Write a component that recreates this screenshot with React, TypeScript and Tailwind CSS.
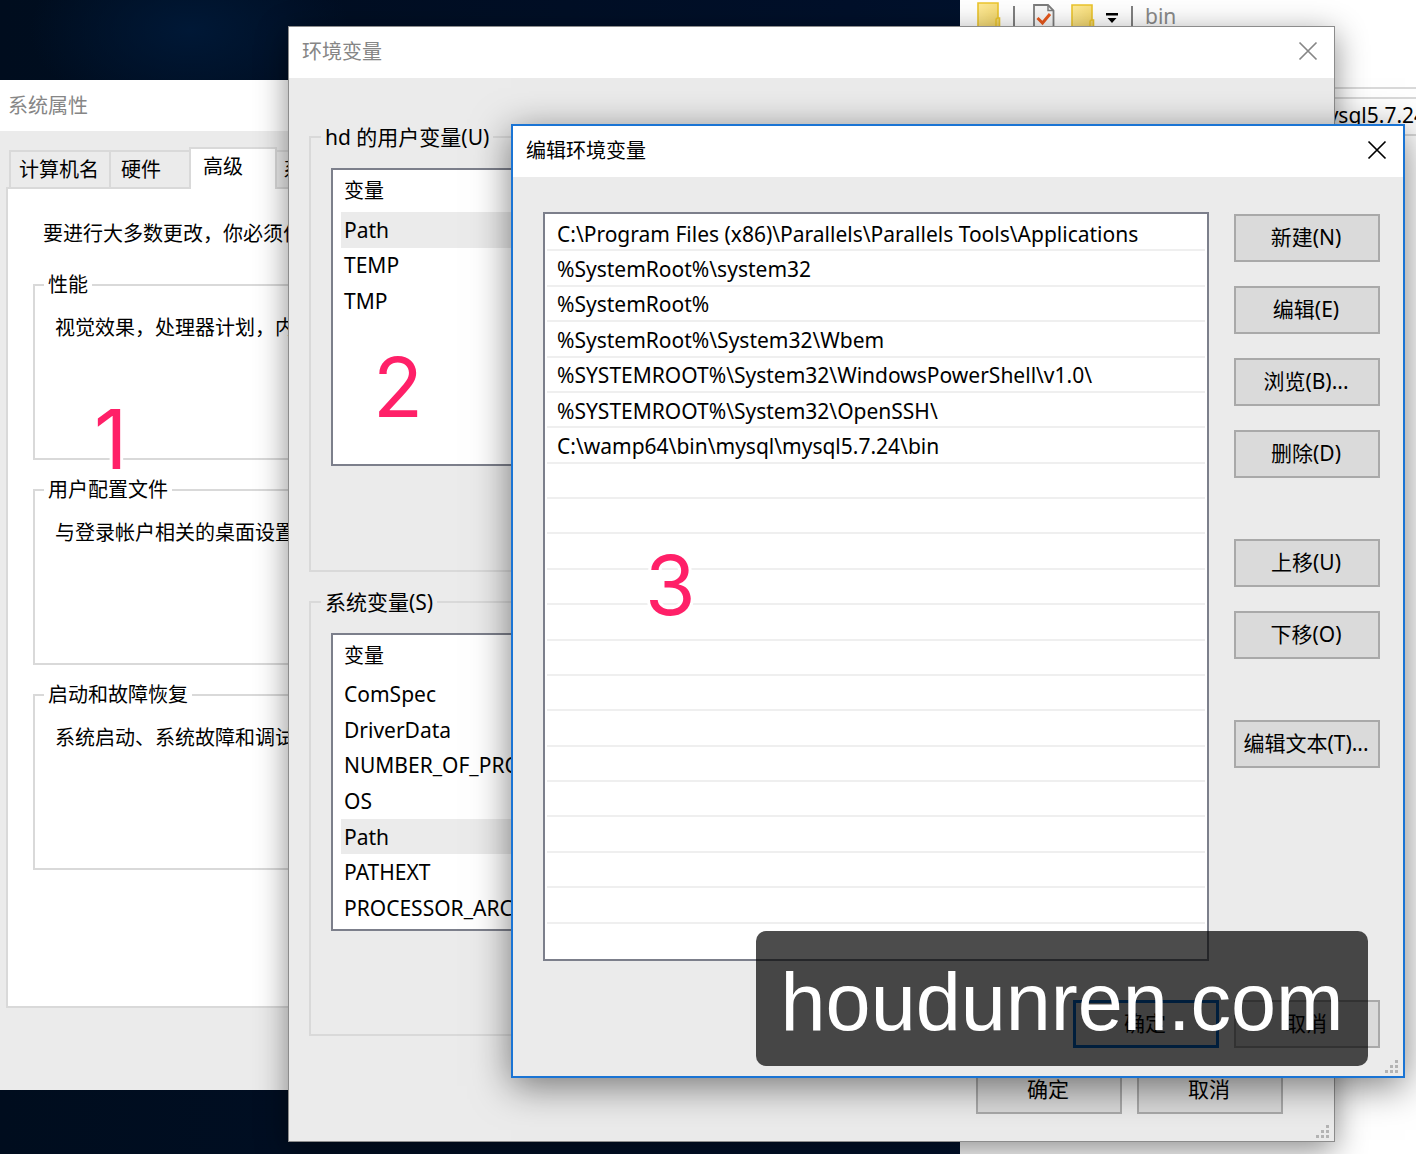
import type { ReactNode } from "react";

const tabs = ["计算机名", "硬件", "高级", "系统保护"];

const systemGroups = [
  { title: "性能", text: "视觉效果，处理器计划，内存使用，以及虚拟内存" },
  { title: "用户配置文件", text: "与登录帐户相关的桌面设置" },
  { title: "启动和故障恢复", text: "系统启动、系统故障和调试信息" },
];

const userVariables = ["Path", "TEMP", "TMP"];

const systemVariables = [
  "ComSpec",
  "DriverData",
  "NUMBER_OF_PROCESSORS",
  "OS",
  "Path",
  "PATHEXT",
  "PROCESSOR_ARCHITECTURE",
];

const pathEntries = [
  "C:\\Program Files (x86)\\Parallels\\Parallels Tools\\Applications",
  "%SystemRoot%\\system32",
  "%SystemRoot%",
  "%SystemRoot%\\System32\\Wbem",
  "%SYSTEMROOT%\\System32\\WindowsPowerShell\\v1.0\\",
  "%SYSTEMROOT%\\System32\\OpenSSH\\",
  "C:\\wamp64\\bin\\mysql\\mysql5.7.24\\bin",
];

const buttonGroups = [
  ["新建(N)", "编辑(E)", "浏览(B)...", "删除(D)"],
  ["上移(U)", "下移(O)"],
  ["编辑文本(T)..."],
];

function CloseIcon() {
  return (
    <svg viewBox="0 0 20 20" className="size-5" fill="none" stroke="currentColor" strokeWidth="1.7" aria-hidden="true">
      <path d="M1.5 1.5 18.5 18.5M18.5 1.5 1.5 18.5" />
    </svg>
  );
}

function FolderIcon() {
  return (
    <svg viewBox="0 0 24 26" className="h-[26px] w-6" aria-hidden="true">
      <defs>
        <linearGradient id="folder" x1="0" y1="0" x2="1" y2="1">
          <stop offset="0" stopColor="#ffec9a" />
          <stop offset="1" stopColor="#f0d264" />
        </linearGradient>
      </defs>
      <path d="M1 1H21V16H22.5V26H1Z" fill="url(#folder)" stroke="#ecc52c" strokeWidth="1.6" />
      <path d="M19 26V18Q19 16 21 16" fill="none" stroke="#ecc52c" strokeWidth="1.5" />
    </svg>
  );
}

function DocumentCheckIcon() {
  return (
    <svg viewBox="0 0 22 26" className="h-[26px] w-[22px]" fill="none" aria-hidden="true">
      <path d="M1 26V1H15L20.5 6.5V26Z" fill="#f8f8f8" stroke="#7c7c7c" strokeWidth="1.8" />
      <path d="M15 1V6.5H20.5" stroke="#7c7c7c" strokeWidth="1.5" />
      <path d="M4.5 14 9.5 19 17 10" stroke="#e8581c" strokeWidth="3" />
    </svg>
  );
}

function Grip() {
  return (
    <svg viewBox="0 0 14 14" className="absolute right-1 bottom-0.5 size-3.5" fill="#b4b4b4" aria-hidden="true">
      <path d="M10 0h3v3h-3zM5 5h3v3h-3zM10 5h3v3h-3zM0 10h3v3h-3zM5 10h3v3h-3zM10 10h3v3h-3z" />
    </svg>
  );
}

function TitleBar({ title, active = false }: { title: string; active?: boolean }) {
  return (
    <header
      className={`flex h-[51px] shrink-0 items-center justify-between bg-white pr-4 pb-[3px] ${active ? "text-black" : "text-[#868686]"}`}
    >
      <h2 className="pt-0.5 pl-[13px]">{title}</h2>
      <button type="button" aria-label={`关闭 ${title}`}>
        <CloseIcon />
      </button>
    </header>
  );
}

function DialogButton({ children, primary = false }: { children: ReactNode; primary?: boolean }) {
  return (
    <button
      type="button"
      className={`h-12 w-[146px] shrink-0 bg-[#dadada] pr-0.5 pb-0.5 text-[21px] whitespace-nowrap ${primary ? "border-[3px] border-[#0067c8]" : "border-2 border-[#a9a9a9]"}`}
    >
      {children}
    </button>
  );
}

function VariableGroup({ title, variables }: { title: string; variables: string[] }) {
  return (
    <fieldset className="min-h-0 flex-1 border-2 border-[#d9d9d9] px-5">
      <legend className="-ml-2.5 px-1 text-[21px] leading-[30px]">{title}</legend>
      <div className="mt-4 h-[298px] border-2 border-[#7c7f8b] bg-white">
        <div className="flex h-[42px] items-center pl-[11px]">变量</div>
        <ul className="grid h-[249px] grid-rows-[repeat(7,minmax(0,1fr))] text-[21px]">
          {variables.map((name) => (
            <li key={name} className={`ml-2 flex items-center pl-[3px] ${name === "Path" ? "bg-[#ebebeb]" : ""}`}>
              {name}
            </li>
          ))}
        </ul>
      </div>
    </fieldset>
  );
}

function Explorer() {
  return (
    <section className="absolute inset-y-0 right-0 left-[960px] overflow-hidden bg-white">
      <div className="flex h-[87px] items-start pt-0.5 pl-[17px]">
        <FolderIcon />
        <i className="mt-1 ml-3 h-5 w-0.5 bg-[#808080]" />
        <span className="mt-0.5 ml-[18px]">
          <DocumentCheckIcon />
        </span>
        <span className="mt-0.5 ml-4">
          <FolderIcon />
        </span>
        <svg viewBox="0 0 14 12" className="mt-2.5 ml-2.5 h-3 w-3.5" aria-hidden="true">
          <path d="M1 1H13V3.5H1ZM2.5 6H11.5L7 11Z" />
        </svg>
        <i className="mt-1 ml-3 h-5 w-0.5 bg-[#808080]" />
        <span className="ml-3 text-[21px] leading-7 text-[#8a8a8a]">bin</span>
      </div>
      <div className="border-y-2 border-[#d9d9d9] pt-2">
        <div className="flex h-[37px] items-center border-t-2 border-[#d9d9d9] pb-1 pl-[348px] text-[21px] whitespace-nowrap">
          mysql5.7.24
        </div>
      </div>
    </section>
  );
}

function SystemProperties() {
  return (
    <section className="absolute top-20 bottom-16 left-0 flex w-[620px] flex-col bg-[#ebebeb]">
      <header className="flex h-[51px] shrink-0 items-center bg-white pl-2 text-[#868686]">
        <h2>系统属性</h2>
      </header>
      <div role="tablist" className="flex h-14 shrink-0 items-end pl-[9px]">
        {tabs.map((tab) =>
          tab === "高级" ? (
            <button
              key={tab}
              type="button"
              role="tab"
              aria-selected="true"
              className="relative -mb-0.5 -ml-0.5 h-[42px] w-[88px] border-2 border-b-0 border-[#d9d9d9] bg-white pr-5 pb-1"
            >
              {tab}
            </button>
          ) : (
            <button
              key={tab}
              type="button"
              role="tab"
              aria-selected="false"
              className={`h-[37px] border-2 border-b-0 border-[#d9d9d9] text-left ${tab === "计算机名" ? "w-[102px] pl-2" : tab === "硬件" ? "-ml-0.5 w-[82px] pl-2.5" : "-ml-0.5 w-[102px] pl-1.5"}`}
            >
              {tab}
            </button>
          ),
        )}
      </div>
      <div className="mx-1.5 mb-[82px] flex-1 border-2 border-[#d9d9d9] bg-white px-[25px] pt-[30px]">
        <p className="pl-2.5 leading-[30px]">要进行大多数更改，你必须作为管理员登录。</p>
        <div className="mt-[21px] flex flex-col gap-[15px]">
          {systemGroups.map((group) => (
            <fieldset key={group.title} className="h-[190px] border-2 border-[#d9d9d9] pl-5">
              <legend className="-ml-[11px] px-1 leading-[30px]">{group.title}</legend>
              <p className="mt-[13px] leading-[30px]">{group.text}</p>
            </fieldset>
          ))}
        </div>
      </div>
    </section>
  );
}

function EnvironmentVariables() {
  return (
    <section className="absolute top-[26px] right-[81px] bottom-3 left-[288px] flex flex-col border border-[#8c8c8c] bg-[#ebebeb] shadow-[0_8px_30px_rgba(0,0,0,0.45)]">
      <TitleBar title="环境变量" />
      <div className="flex flex-1 flex-col gap-[15px] px-5 pt-11">
        <VariableGroup title="hd 的用户变量(U)" variables={userVariables} />
        <VariableGroup title="系统变量(S)" variables={systemVariables} />
      </div>
      <footer className="flex justify-end gap-[15px] pt-[30px] pr-[51px] pb-[27px]">
        <DialogButton>确定</DialogButton>
        <DialogButton>取消</DialogButton>
      </footer>
      <Grip />
    </section>
  );
}

function EditVariable() {
  return (
    <section className="absolute top-[124px] right-[11px] bottom-[76px] left-[511px] flex flex-col border-2 border-[#1a74d4] bg-[#ebebeb] shadow-[0_8px_36px_rgba(0,0,0,0.5)]">
      <TitleBar title="编辑环境变量" active />
      <div className="flex min-h-0 flex-1 gap-[25px] pt-[35px] pr-[23px] pl-[30px]">
        <ul className="grid flex-1 grid-rows-[repeat(21,minmax(0,1fr))] border-2 border-[#7c7f8b] bg-white px-0.5 pt-0.5 text-[21px]">
          {Array.from({ length: 21 }, (_, i) => (
            <li
              key={i}
              className="flex items-center border-b-2 border-[#efefef] pt-0.5 pl-2.5 leading-7 whitespace-nowrap last:border-b-0"
            >
              {pathEntries[i]}
            </li>
          ))}
        </ul>
        <div className="flex flex-col gap-[61px] pt-0.5">
          {buttonGroups.map((group) => (
            <div key={group[0]} className="flex flex-col gap-6">
              {group.map((label) => (
                <DialogButton key={label}>{label}</DialogButton>
              ))}
            </div>
          ))}
        </div>
      </div>
      <footer className="flex shrink-0 justify-end gap-[15px] pt-[39px] pr-[23px] pb-7">
        <DialogButton primary>确定</DialogButton>
        <DialogButton>取消</DialogButton>
      </footer>
      <Grip />
    </section>
  );
}

function StepNumber({ children, place }: { children: ReactNode; place: string }) {
  return (
    <span
      className={`absolute font-['Inter',sans-serif] text-[82px] leading-[60px] text-[#ff2068] [-webkit-text-stroke:6px_white] [paint-order:stroke_fill] ${place}`}
    >
      {children}
    </span>
  );
}

export default function App() {
  return (
    <main className="relative h-screen overflow-hidden bg-[#000f22] bg-[radial-gradient(ellipse_160px_90px_at_190px_30px,#001836,transparent),linear-gradient(90deg,#000d1e,#00102a_60%,#001733)] font-['Noto_Sans','Noto_Sans_CJK_SC',sans-serif] text-[20px] leading-[30px] text-black">
      <Explorer />
      <SystemProperties />
      <EnvironmentVariables />
      <EditVariable />
      <StepNumber place="top-[410px] left-[94px]">1</StepNumber>
      <StepNumber place="top-[358px] left-[373px]">2</StepNumber>
      <StepNumber place="top-[556px] left-[645px]">3</StepNumber>
      <div className="absolute right-12 bottom-[88px] flex h-[135px] w-[612px] items-center justify-center rounded-[10px] bg-black/70 pt-2 font-['Liberation_Sans',sans-serif] text-[81px] leading-none text-white">
        houdunren.com
      </div>
    </main>
  );
}
